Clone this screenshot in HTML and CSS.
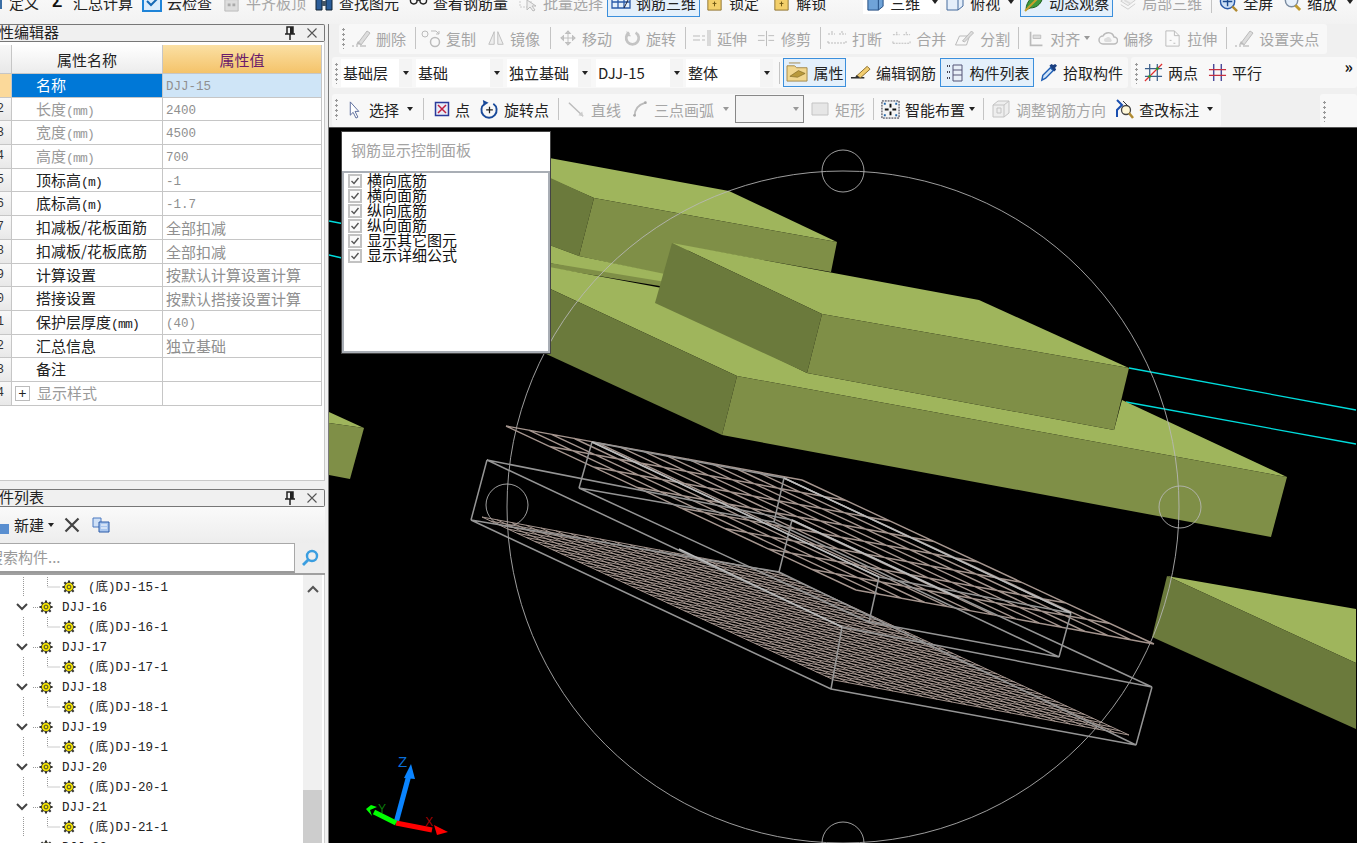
FILE: index.html
```html
<!DOCTYPE html>
<html lang="zh-CN">
<head>
<meta charset="utf-8">
<title>钢筋三维</title>
<link rel="stylesheet" href="styles.css">
</head>
<body>
<svg class="sprite" xmlns="http://www.w3.org/2000/svg">
  <symbol id="i-del" viewBox="0 0 20 20"><path d="M1 18h2M5 18h2M9 18h6" stroke="#aaa" fill="none"/><path d="M7 15 16 3l3 2-9 12z" fill="#ddd" stroke="#bbb"/><path d="M5 17l2-4 3 3z" fill="#bbb"/></symbol>
  <symbol id="i-copy" viewBox="0 0 20 20"><circle cx="4" cy="6" r="3" fill="none" stroke="#bbb"/><circle cx="14" cy="14" r="4.5" fill="none" stroke="#bbb" stroke-width="1.5"/><path d="M10 3h5l3 3M18 3v3h-3" fill="none" stroke="#bbb"/></symbol>
  <symbol id="i-mirror" viewBox="0 0 20 20"><path d="M8 3 2 17h6zM12 3l6 14h-6z" fill="#eee" stroke="#bbb"/></symbol>
  <symbol id="i-move" viewBox="0 0 20 20"><path d="M10 2v16M2 10h16M10 2 7 5h6zM10 18l-3-3h6zM2 10l3-3v6zM18 10l-3-3v6z" fill="#ccc" stroke="#bbb"/></symbol>
  <symbol id="i-rot" viewBox="0 0 20 20"><path d="M7 4a7 7 0 1 0 7 0" fill="none" stroke="#c4c4c4" stroke-width="3"/><path d="M4 2v6h5z" fill="#c4c4c4"/></symbol>
  <symbol id="i-ext" viewBox="0 0 20 20"><path d="M1 8h7M1 12h7M10 8h3M10 12h3M16 2v16M18 2v16" stroke="#bbb" fill="none"/></symbol>
  <symbol id="i-trim" viewBox="0 0 20 20"><path d="M1 7h7M1 12h7M12 7h6M12 12h6M10 2v16" stroke="#bbb" fill="none"/></symbol>
  <symbol id="i-brk" viewBox="0 0 20 20"><path d="M1 6h7M12 6h7M1 15h18M1 15v-3M19 15v-3M5 3v3M15 3v3" stroke="#bbb" fill="none" stroke-dasharray="2 1"/></symbol>
  <symbol id="i-split" viewBox="0 0 20 20"><path d="M1 17 5 8h10l-3 9z" fill="none" stroke="#bbb"/><path d="M8 13 17 3l2 2-9 9z" fill="#ddd" stroke="#bbb"/></symbol>
  <symbol id="i-align" viewBox="0 0 20 20"><path d="M3 2v16h14" fill="none" stroke="#bbb" stroke-width="2"/><path d="M6 6h9v4H6z" fill="#ddd" stroke="#bbb"/></symbol>
  <symbol id="i-off" viewBox="0 0 20 20"><path d="M5 16a4 4 0 0 1 0-8 6 6 0 0 1 11 1 3.500 3.500 0 0 1 0 7z" fill="none" stroke="#bbb" stroke-width="1.500"/><path d="M8 14a2 2 0 0 1 0-4 3 3 0 0 1 5 1 2 2 0 0 1 0 3z" fill="#ddd"/></symbol>
  <symbol id="i-str" viewBox="0 0 20 20"><path d="M3 2h9l5 5v11H3z" fill="#fafafa" stroke="#bbb"/><path d="M12 2v5h5M7 12h2M11 15h2" stroke="#bbb" fill="none"/></symbol>
  <symbol id="i-attr" viewBox="0 0 24 22"><path d="M1 4h8l2 2h11v14H1z" fill="#f1d78f" stroke="#a3884a"/><path d="M4 15l9-6 7 3-8 4z" fill="#b99a3c" stroke="#75601f" stroke-width=".6"/><path d="M3 1h12" stroke="#a3884a"/></symbol>
  <symbol id="i-edit" viewBox="0 0 22 20"><path d="M1 15h14" stroke="#222" stroke-width="1.500"/><path d="M7 13 18 3l3 3-10 9z" fill="#f2cd70" stroke="#8a6d2c"/><path d="M5 15l2-3 3 3z" fill="#333"/></symbol>
  <symbol id="i-list" viewBox="0 0 20 20"><path d="M2 3h3M2 9h3M2 15h3" stroke="#445" stroke-width="2" stroke-dasharray="1 1"/><path d="M8 2h9v16H8zM8 7h9M8 12h9" fill="#e8f0f8" stroke="#557"/></symbol>
  <symbol id="i-pick" viewBox="0 0 20 20"><path d="M3 18l1-5 8-8 3 3-8 8z" fill="#cfe3f8" stroke="#1f5fb5" stroke-width="1.500"/><path d="M11 3l2-2 2 1 2-1 2 2-2 2 1 2-2 2z" fill="#1a3f80"/></symbol>
  <symbol id="i-two" viewBox="0 0 20 20"><path d="M1 6h18M1 14h18M6 1v18M14 1v18" stroke="#3b5f8a" fill="none" stroke-width="1.300"/><path d="M1 19 19 1" stroke="#e03030" stroke-width="1.300"/><circle cx="6" cy="14" r="1.500" fill="#2a9a2a"/><circle cx="14" cy="6" r="1.500" fill="#2a9a2a"/></symbol>
  <symbol id="i-par" viewBox="0 0 20 20"><path d="M6 1v18M14 1v18" stroke="#4a4a9a" stroke-width="1.500"/><path d="M1 7h18M1 13h18" stroke="#c83040" stroke-width="1.500"/></symbol>
  <symbol id="i-cur" viewBox="0 0 17 20"><path d="M3 2v14l3-3 3 6 2-1-3-6h4z" fill="#fff" stroke="#5a6a9a"/></symbol>
  <symbol id="i-pt" viewBox="0 0 16 16"><path d="M1.500 1.500h13v13h-13z" fill="#e8ecf8" stroke="#2a3a9a" stroke-width="1.500"/><path d="M4 4l8 8M12 4l-8 8" stroke="#c02040" stroke-width="1.500"/></symbol>
  <symbol id="i-rp" viewBox="0 0 20 20"><path d="M5 4a8 8 0 1 0 9 0" fill="none" stroke="#1a4a9a" stroke-width="2"/><path d="M3 0l6 3-5 3z" fill="#1a4a9a"/><path d="M10 7v7M6.500 10.500h7" stroke="#222" stroke-width="1.300"/></symbol>
  <symbol id="i-line" viewBox="0 0 20 20"><path d="M2 3 17 17" stroke="#bbb" stroke-width="1.500"/><path d="M17 17l-5-1 4-4z" fill="#ccc"/></symbol>
  <symbol id="i-arc" viewBox="0 0 20 20"><path d="M4 18C4 10 9 5 16 3" fill="none" stroke="#bbb" stroke-width="2"/><circle cx="4" cy="17" r="1.500" fill="#aaa"/><circle cx="16" cy="3" r="1.500" fill="#aaa"/></symbol>
  <symbol id="i-rect" viewBox="0 0 20 20"><path d="M2 4h16v12H2z" fill="#e6e6e6" stroke="#c4c4c4"/></symbol>
  <symbol id="i-smart" viewBox="0 0 20 20"><path d="M1 1h18v18H1z" fill="#f4f4f4" stroke="#223" stroke-dasharray="2 1"/><path d="M10 4v4M10 12v4M4 10h4M12 10h4" stroke="#111" stroke-width="2"/><path d="M3 3h2v2H3zM15 3h2v2h-2zM3 15h2v2H3zM15 15h2v2h-2z" fill="#26a"/></symbol>
  <symbol id="i-adj" viewBox="0 0 20 20"><path d="M2 6 7 2h11v12l-5 4H2z" fill="#eee" stroke="#c4c4c4"/><path d="M2 6h11v12M13 6l5-4M6 9h4v5H6z" fill="none" stroke="#c4c4c4"/></symbol>
  <symbol id="i-mark" viewBox="0 0 20 20"><path d="M3 1 8 6 3 11v7" fill="none" stroke="#1a4fb0" stroke-width="2"/><circle cx="12" cy="11" r="4.500" fill="#fff8d8" stroke="#444" stroke-width="1.300"/><path d="M15 14l4 5" stroke="#b08a30" stroke-width="2.500"/><path d="M9 2l5 5" stroke="#333"/></symbol>
  <symbol id="i-cloud" viewBox="0 0 20 20"><path d="M1 3h18v16H1z" fill="#dcecfb" stroke="#1f84d8" stroke-width="2"/><path d="M5 9l4 4 7-7" fill="none" stroke="#1669b5" stroke-width="2"/></symbol>
  <symbol id="i-flush" viewBox="0 0 20 20"><path d="M3 7h14v12H3z" fill="#ddd" stroke="#bbb"/><path d="M6 3h12v4H6z" fill="#c4c4c4"/><path d="M6 11h3v3H6zM11 11h3v3h-3z" fill="#aaa"/></symbol>
  <symbol id="i-find" viewBox="0 0 20 20"><path d="M2 6h6v12H2zM12 6h6v12h-6z" fill="#2b5d99" stroke="#123"/><path d="M8 9h4v5H8zM4 2h3v4H4zM13 2h3v4h-3z" fill="#456"/></symbol>
  <symbol id="i-glass" viewBox="0 0 20 20"><circle cx="5" cy="8" r="3.500" fill="none" stroke="#222" stroke-width="1.500"/><circle cx="15" cy="8" r="3.500" fill="none" stroke="#222" stroke-width="1.500"/><path d="M8 8h4M1 6l2-3M19 6l-2-3" stroke="#222"/></symbol>
  <symbol id="i-batch" viewBox="0 0 20 20"><path d="M2 2h11v13H2z" fill="none" stroke="#ccc" stroke-dasharray="2 1"/><path d="M9 8v10l3-3 3 4 2-1-3-4h4z" fill="#eee" stroke="#bbb"/></symbol>
  <symbol id="i-r3d" viewBox="0 0 20 20"><path d="M1 4h18v12H1zM7 4v12M13 4v12M1 10h18" fill="none" stroke="#2a5aa8" stroke-width="1.300"/><path d="M13 16 19 4" stroke="#223"/></symbol>
  <symbol id="i-lock" viewBox="0 0 20 20"><path d="M3 6h14v12H3z" fill="#f3cf6a" stroke="#8f7430"/><path d="M6 6V3h8v3" fill="none" stroke="#999" stroke-width="1.500"/><path d="M10 9v5M8 11h4" stroke="#6c5413"/></symbol>
  <symbol id="i-cube" viewBox="0 0 20 20"><path d="M2 6 7 2h11v12l-5 4H2z" fill="#6fa3d8" stroke="#1f4a80"/><path d="M2 6h11v12M13 6l5-4" fill="none" stroke="#1f4a80"/></symbol>
  <symbol id="i-top" viewBox="0 0 20 20"><path d="M2 6 7 2h11v12l-5 4H2z" fill="#e4eefa" stroke="#456a9c"/><path d="M2 6h11v12M13 6l5-4" fill="none" stroke="#456a9c"/><path d="M7 2h11l-5 4H2z" fill="#a9c8ea"/></symbol>
  <symbol id="i-dyn" viewBox="0 0 20 20"><path d="M2 18C2 9 9 2 19 2c0 8-5 14-13 14z" fill="#3e9a3e" stroke="#1d5f1d"/><path d="M1 19 13 7" stroke="#c9a02c" stroke-width="2"/></symbol>
  <symbol id="i-part" viewBox="0 0 20 20"><path d="M2 9 10 3l8 5-8 6z" fill="#f1f1f1" stroke="#ccc"/><path d="M2 13l8 5 8-6" fill="none" stroke="#ccc"/><path d="M6 8l7 4" stroke="#ddd" stroke-width="2"/></symbol>
  <symbol id="i-full" viewBox="0 0 20 20"><circle cx="9" cy="9" r="7.500" fill="#cde0f6" stroke="#2a5aa8" stroke-width="1.500"/><path d="M9 4v10M4 9h10" stroke="#1a4a90" stroke-width="1.500"/><path d="M14 14l5 5" stroke="#b08a30" stroke-width="2.500"/></symbol>
  <symbol id="i-zoom" viewBox="0 0 20 20"><circle cx="9" cy="8" r="6.500" fill="#e8f1fb" stroke="#7a8ba0" stroke-width="1.500"/><path d="M13 13l5 5" stroke="#c09a30" stroke-width="3"/></symbol>
  <symbol id="i-gear" viewBox="0 0 16 16"><path d="M8 .5v15M.5 8h15M2.700 2.700l10.600 10.600M13.300 2.700 2.700 13.300" stroke="#333" stroke-width="2.400"/><circle cx="8" cy="8" r="5.200" fill="#f4e400" stroke="#333"/><circle cx="8" cy="8" r="2.200" fill="#f4e400" stroke="#333"/></symbol>
  <symbol id="i-pin" viewBox="0 0 12 14"><path d="M3 1h6v7H3zM1 8h10M6 8v6" fill="none" stroke="#222" stroke-width="1.500"/><path d="M6 1h3v7H6z" fill="#222"/></symbol>
  <symbol id="i-x" viewBox="0 0 12 12"><path d="M1.500 1.500l9 9M10.500 1.500l-9 9" stroke="#555" stroke-width="1.100"/></symbol>
  <symbol id="i-check" viewBox="0 0 14 14"><path d="M1 1h12v12H1z" fill="#fafafa" stroke="#c2c2c2" stroke-width="2"/><path d="M3.500 7 6 9.500 10.500 4" fill="none" stroke="#555" stroke-width="1.400"/></symbol>
</svg>

<header class="row-a">
  <div class="row-a-inner">
    <span class="clip-mark"></span>
    <span class="tool m7"><span>定义</span></span>
    <span class="sigma m13">Σ</span>
    <span class="tool m11"><span>汇总计算</span></span>
    <span class="tool m9"><svg class="ic20"><use href="#i-cloud"/></svg><span>云检查</span></span>
    <span class="tool off m10"><svg class="ic19"><use href="#i-flush"/></svg><span>平齐板顶</span></span>
    <span class="tool m8"><svg class="ic20"><use href="#i-find"/></svg><span>查找图元</span></span>
    <span class="tool m10"><svg class="ic19"><use href="#i-glass"/></svg><span>查看钢筋量</span></span>
    <span class="tool off m10"><svg class="ic20"><use href="#i-batch"/></svg><span>批量选择</span></span>
    <span class="tool on a-on m4"><svg class="ic20"><use href="#i-r3d"/></svg><span>钢筋三维</span></span>
    <span class="tool m5"><svg class="ic19"><use href="#i-lock"/></svg><span>锁定</span></span>
    <span class="tool m13"><svg class="ic19"><use href="#i-lock"/></svg><span>解锁</span></span>
    <span class="combo3d m37"><span class="tool"><svg class="ic19"><use href="#i-cube"/></svg><span>三维</span></span><i class="arrow dark m12"></i></span>
    <span class="tool m5"><svg class="ic20"><use href="#i-top"/></svg><span>俯视</span></span>
    <i class="arrow dark m8"></i>
    <span class="tool on a-on2 m6"><svg class="ic20"><use href="#i-dyn"/></svg><span>动态观察</span></span>
    <span class="tool off m6"><svg class="ic18"><use href="#i-part"/></svg><span>局部三维</span></span>
    <i class="sep m9"></i>
    <span class="tool m7"><svg class="ic19"><use href="#i-full"/></svg><span>全屏</span></span>
    <span class="tool m10"><svg class="ic19"><use href="#i-zoom"/></svg><span>缩放</span></span>
    <i class="arrow dark m10"></i>
  </div>
</header>

<div class="body-row">
  <aside class="left">
    <section class="pane prop-pane">
      <div class="dock-title"><span class="dock-name">属性编辑器</span><svg class="pin"><use href="#i-pin"/></svg><svg class="close"><use href="#i-x"/></svg></div>
      <div class="prop-wrap">
        <div class="prop-grid">
          <div class="c idx"></div><div class="c hdr-name">属性名称</div><div class="c hdr-val">属性值</div>

          <div class="c idx idx-sel">1</div><div class="c name sel-name">名称</div><div class="c val sel-val">DJJ-15</div>
          <div class="c idx">2</div><div class="c name dim">长度<span class="u">(mm)</span></div><div class="c val">2400</div>
          <div class="c idx">3</div><div class="c name dim">宽度<span class="u">(mm)</span></div><div class="c val">4500</div>
          <div class="c idx">4</div><div class="c name dim">高度<span class="u">(mm)</span></div><div class="c val">700</div>
          <div class="c idx">5</div><div class="c name">顶标高<span class="u">(m)</span></div><div class="c val">-1</div>
          <div class="c idx">6</div><div class="c name">底标高<span class="u">(m)</span></div><div class="c val">-1.7</div>
          <div class="c idx">7</div><div class="c name">扣减板/花板面筋</div><div class="c val cjk">全部扣减</div>
          <div class="c idx">8</div><div class="c name">扣减板/花板底筋</div><div class="c val cjk">全部扣减</div>
          <div class="c idx">9</div><div class="c name">计算设置</div><div class="c val cjk">按默认计算设置计算</div>
          <div class="c idx">10</div><div class="c name">搭接设置</div><div class="c val cjk">按默认搭接设置计算</div>
          <div class="c idx">11</div><div class="c name">保护层厚度<span class="u">(mm)</span></div><div class="c val">(40)</div>
          <div class="c idx">12</div><div class="c name">汇总信息</div><div class="c val cjk">独立基础</div>
          <div class="c idx">13</div><div class="c name">备注</div><div class="c val"></div>
          <div class="c idx">14</div><div class="c name dim name-plus"><span class="plus">+</span>显示样式</div><div class="c val"></div>
        </div>
      </div>
    </section>

    <section class="pane list-pane">
      <div class="dock-title"><span class="dock-name">构件列表</span><svg class="pin"><use href="#i-pin"/></svg><svg class="close"><use href="#i-x"/></svg></div>
      <div class="list-tools">
        <span class="new-clip"></span>
        <span class="new-text">新建</span><i class="arrow dark m4"></i>
        <svg class="tool-x" viewBox="0 0 16 16"><path d="M1.500 1.500l13 13M14.500 1.500l-13 13" stroke="#444" stroke-width="2.200"/></svg>
        <svg class="tool-copy" viewBox="0 0 18 16"><path d="M1 1h8v9H1z" fill="#cfe0f6" stroke="#4a78c0"/><path d="M7 5h10v10H7z" fill="#a9c6ee" stroke="#2a5aa8"/><path d="M9 8h6M9 11h6" stroke="#fff"/></svg>
      </div>
      <div class="search">
        <div class="search-box"><span class="search-text">搜索构件...</span></div>
        <div class="search-btn"><svg viewBox="0 0 18 18" class="search-ic"><circle cx="11" cy="7" r="5" fill="none" stroke="#3b9ee0" stroke-width="2.400"/><path d="M7 11l-5 5" stroke="#3b9ee0" stroke-width="2.800"/></svg></div>
      </div>
      <div class="tree-area">
        <div class="tree">
          <div class="t-row"><svg class="conn-c" viewBox="0 0 80 20"><path class="dots" d="M23.500 0V20M47.500 0V10H60"/><use href="#i-gear" x="62" y="3" width="14" height="14"/></svg><span class="t-text">(底)DJ-15-1</span></div>
          <div class="t-row"><svg class="conn-p" viewBox="0 0 54 20"><path d="M17 7l5 5 5-5" fill="none" stroke="#444" stroke-width="2"/><path class="dots" d="M33 10.500h5"/><use href="#i-gear" x="39" y="3" width="14" height="14"/></svg><span class="t-text">DJJ-16</span></div>
          <div class="t-row"><svg class="conn-c" viewBox="0 0 80 20"><path class="dots" d="M23.500 0V20M47.500 0V10H60"/><use href="#i-gear" x="62" y="3" width="14" height="14"/></svg><span class="t-text">(底)DJ-16-1</span></div>
          <div class="t-row"><svg class="conn-p" viewBox="0 0 54 20"><path d="M17 7l5 5 5-5" fill="none" stroke="#444" stroke-width="2"/><path class="dots" d="M33 10.500h5"/><use href="#i-gear" x="39" y="3" width="14" height="14"/></svg><span class="t-text">DJJ-17</span></div>
          <div class="t-row"><svg class="conn-c" viewBox="0 0 80 20"><path class="dots" d="M23.500 0V20M47.500 0V10H60"/><use href="#i-gear" x="62" y="3" width="14" height="14"/></svg><span class="t-text">(底)DJ-17-1</span></div>
          <div class="t-row"><svg class="conn-p" viewBox="0 0 54 20"><path d="M17 7l5 5 5-5" fill="none" stroke="#444" stroke-width="2"/><path class="dots" d="M33 10.500h5"/><use href="#i-gear" x="39" y="3" width="14" height="14"/></svg><span class="t-text">DJJ-18</span></div>
          <div class="t-row"><svg class="conn-c" viewBox="0 0 80 20"><path class="dots" d="M23.500 0V20M47.500 0V10H60"/><use href="#i-gear" x="62" y="3" width="14" height="14"/></svg><span class="t-text">(底)DJ-18-1</span></div>
          <div class="t-row"><svg class="conn-p" viewBox="0 0 54 20"><path d="M17 7l5 5 5-5" fill="none" stroke="#444" stroke-width="2"/><path class="dots" d="M33 10.500h5"/><use href="#i-gear" x="39" y="3" width="14" height="14"/></svg><span class="t-text">DJJ-19</span></div>
          <div class="t-row"><svg class="conn-c" viewBox="0 0 80 20"><path class="dots" d="M23.500 0V20M47.500 0V10H60"/><use href="#i-gear" x="62" y="3" width="14" height="14"/></svg><span class="t-text">(底)DJ-19-1</span></div>
          <div class="t-row"><svg class="conn-p" viewBox="0 0 54 20"><path d="M17 7l5 5 5-5" fill="none" stroke="#444" stroke-width="2"/><path class="dots" d="M33 10.500h5"/><use href="#i-gear" x="39" y="3" width="14" height="14"/></svg><span class="t-text">DJJ-20</span></div>
          <div class="t-row"><svg class="conn-c" viewBox="0 0 80 20"><path class="dots" d="M23.500 0V20M47.500 0V10H60"/><use href="#i-gear" x="62" y="3" width="14" height="14"/></svg><span class="t-text">(底)DJ-20-1</span></div>
          <div class="t-row"><svg class="conn-p" viewBox="0 0 54 20"><path d="M17 7l5 5 5-5" fill="none" stroke="#444" stroke-width="2"/><path class="dots" d="M33 10.500h5"/><use href="#i-gear" x="39" y="3" width="14" height="14"/></svg><span class="t-text">DJJ-21</span></div>
          <div class="t-row"><svg class="conn-c" viewBox="0 0 80 20"><path class="dots" d="M23.500 0V20M47.500 0V10H60"/><use href="#i-gear" x="62" y="3" width="14" height="14"/></svg><span class="t-text">(底)DJ-21-1</span></div>
          <div class="t-row"><svg class="conn-p" viewBox="0 0 54 20"><path d="M17 7l5 5 5-5" fill="none" stroke="#444" stroke-width="2"/><path class="dots" d="M33 10.500h5"/><use href="#i-gear" x="39" y="3" width="14" height="14"/></svg><span class="t-text">DJJ-22</span></div>
        </div>
        <div class="scroll"><svg class="scroll-up" viewBox="0 0 12 8"><path d="M1 7l5-5 5 5" fill="none" stroke="#555" stroke-width="2"/></svg><div class="thumb"></div></div>
      </div>
    </section>
  </aside>

  <main class="main">
    <div class="row-b">
      <div class="bar bar-b">
        <i class="grip"></i>
        <span class="tool off m6"><svg class="ic20"><use href="#i-del"/></svg><span>删除</span></span>
        <i class="sep m9"></i>
        <span class="tool off m5"><svg class="ic20"><use href="#i-copy"/></svg><span>复制</span></span>
        <span class="tool off m11"><svg class="ic18"><use href="#i-mirror"/></svg><span>镜像</span></span>
        <i class="sep m10"></i>
        <span class="tool off m8"><svg class="ic18"><use href="#i-move"/></svg><span>移动</span></span>
        <span class="tool off m11"><svg class="ic18"><use href="#i-rot"/></svg><span>旋转</span></span>
        <i class="sep m9"></i>
        <span class="tool off m6"><svg class="ic20"><use href="#i-ext"/></svg><span>延伸</span></span>
        <span class="tool off m10"><svg class="ic19"><use href="#i-trim"/></svg><span>修剪</span></span>
        <i class="sep m9"></i>
        <span class="tool off m6"><svg class="ic20"><use href="#i-brk"/></svg><span>打断</span></span>
        <span class="tool off m10"><svg class="ic19"><use href="#i-brk"/></svg><span>合并</span></span>
        <span class="tool off m8"><svg class="ic21"><use href="#i-split"/></svg><span>分割</span></span>
        <i class="sep m8"></i>
        <span class="tool off m9"><svg class="ic17"><use href="#i-align"/></svg><span>对齐</span></span>
        <i class="arrow m4"></i>
        <span class="tool off m8"><svg class="ic20"><use href="#i-off"/></svg><span>偏移</span></span>
        <span class="tool off m10"><svg class="ic19"><use href="#i-str"/></svg><span>拉伸</span></span>
        <i class="sep m9"></i>
        <span class="tool off m7"><svg class="ic20"><use href="#i-del"/></svg><span>设置夹点</span></span>
      </div>
    </div>

    <div class="row-c">
      <div class="bar bar-c1">
        <i class="grip"></i>
        <span class="sel s71 m3"><span>基础层</span><b><i class="arrow dark"></i></b></span>
        <span class="sel s87 m4"><span>基础</span><b><i class="arrow dark"></i></b></span>
        <span class="sel s84 m4"><span>独立基础</span><b><i class="arrow dark"></i></b></span>
        <span class="sel s87 m5"><span>DJJ-15</span><b><i class="arrow dark"></i></b></span>
        <span class="sel s87 m3"><span>整体</span><b><i class="arrow dark"></i></b></span>
        <i class="sep m6"></i>
        <span class="tool on c-attr m3"><svg class="ic23"><use href="#i-attr"/></svg><span>属性</span></span>
        <span class="tool m4"><svg class="ic21"><use href="#i-edit"/></svg><span>编辑钢筋</span></span>
        <span class="tool on c-list m4"><svg class="ic20"><use href="#i-list"/></svg><span>构件列表</span></span>
        <span class="tool m5"><svg class="ic19"><use href="#i-pick"/></svg><span>拾取构件</span></span>
      </div>
      <div class="bar bar-c2">
        <i class="grip"></i>
        <span class="tool m6"><svg class="ic19"><use href="#i-two"/></svg><span>两点</span></span>
        <span class="tool m10"><svg class="ic19"><use href="#i-par"/></svg><span>平行</span></span>
        <span class="more">»</span>
      </div>
    </div>

    <div class="row-d">
      <div class="bar bar-d">
        <i class="grip"></i>
        <span class="tool m9"><svg class="ic17"><use href="#i-cur"/></svg><span>选择</span></span>
        <i class="arrow dark m8"></i>
        <i class="sep m10"></i>
        <span class="tool m10"><svg class="ic16"><use href="#i-pt"/></svg><span>点</span></span>
        <span class="tool m10"><svg class="ic19"><use href="#i-rp"/></svg><span>旋转点</span></span>
        <i class="sep m9"></i>
        <span class="tool off m8"><svg class="ic19"><use href="#i-line"/></svg><span>直线</span></span>
        <span class="tool off m10"><svg class="ic18"><use href="#i-arc"/></svg><span>三点画弧</span></span>
        <i class="arrow m9"></i>
        <span class="combo m6"><i class="arrow"></i></span>
        <span class="tool off m6"><svg class="ic20"><use href="#i-rect"/></svg><span>矩形</span></span>
        <i class="sep m8"></i>
        <span class="tool m7"><svg class="ic19"><use href="#i-smart"/></svg><span>智能布置</span></span>
        <i class="arrow dark m4"></i>
        <i class="sep m8"></i>
        <span class="tool off m7"><svg class="ic20"><use href="#i-adj"/></svg><span>调整钢筋方向</span></span>
        <span class="tool m8"><svg class="ic20"><use href="#i-mark"/></svg><span>查改标注</span></span>
        <i class="arrow dark m8"></i>
      </div>
      <div class="bar bar-d2"><i class="grip"></i></div>
    </div>

    <div class="canvas">
      <svg class="scene" viewBox="330 128 1027 715" xmlns="http://www.w3.org/2000/svg">
        <g class="cyan">
          <path d="M330 221 343 223.500M330 255 343 258M1130 368 1357 410M1127 402 1357 444"/>
        </g>
        <!-- upper block -->
        <polygon class="g-top" points="545,157 730,191 838,242 595,198 545,176"/>
        <polygon class="g-dark" points="545,175 595,198 580,256 545,243"/>
        <polygon class="g-side" points="595,198 838,242 832,272 690,247 680,278 580,256"/>
        <!-- thin plates -->
        <polygon class="g-top" points="545,243 580,256 685,278 685,290 545,262"/>
        <polygon class="g-side" points="545,262 685,285 685,290 545,267"/>
        <!-- base -->
        <polygon class="g-top" points="545,266 690,293 690,315 808,373 1115,430 1123,400 1288,477 738,376 545,286"/>
        <polygon class="g-dark" points="545,286 738,376 723,435 545,353"/>
        <polygon class="g-side" points="738,376 1288,477 1272,537 723,435"/>
        <!-- middle block -->
        <polygon class="g-top" points="673,243 980,300 1130,368 823,314"/>
        <polygon class="g-dark" points="673,243 823,314 808,373 656,303"/>
        <polygon class="g-side" points="823,314 1130,368 1115,430 808,373"/>
        <!-- right block -->
        <polygon class="g-top" points="1168,576 1357,609 1357,663"/>
        <polygon class="g-dark" points="1168,576 1357,663 1357,729 1153,637"/>
        <!-- left block -->
        <polygon class="g-top" points="330,412 365,428 330,423"/>
        <polygon class="g-side" points="330,423 365,428 351,479 330,475"/>

        <g class="gizmo">
          <circle cx="844" cy="507" r="336"/>
          <circle cx="844" cy="171" r="21"/>
          <circle cx="1181" cy="507" r="21"/>
          <circle cx="508" cy="505" r="21"/>
          <circle cx="844" cy="843" r="21"/>
        </g>

        <path id="mesh-up" class="mesh"/>
        <path id="mesh-low" class="mesh mesh-thin"/>

        <g class="wire">
          <path d="M488 460 793 520 1153 687 843 627ZM472 520 780 572 1137 745 832 689ZM488 460 472 520M793 520 780 572M1153 687 1137 745M843 627 832 689"/>
          <path d="M593 442 785 478 1072 613 880 577ZM580 488 775 522 1060 657 870 622ZM593 442 580 488M785 478 775 522M1072 613 1060 657M880 577 870 622"/>
          <path class="wire-hi" d="M593 442 880 577M785 478 1072 613M680 549 843 627M793 520 960 598"/>
        </g>

        <g class="axes">
          <path class="ax-b" d="M397 823 410 775"/>
          <path class="ax-b-h" d="M412 764 416 779 405 778z"/>
          <path class="ax-r" d="M397 823 433 830"/>
          <path class="ax-r-h" d="M449 832 435 825 438 835z"/>
          <path class="ax-g" d="M397 823 375 812"/>
          <path class="ax-g-h" d="M367 809 372 805 378 807 371 810 373 816z"/>
          <text class="ax-t z" x="399" y="767">Z</text>
          <text class="ax-t y" x="379" y="813">Y</text>
          <text class="ax-t x" x="426" y="826">X</text>
        </g>
      </svg>

      <div class="float-panel">
        <div class="float-title">钢筋显示控制面板</div>
        <div class="float-list">
          <div class="chk"><svg><use href="#i-check"/></svg><span>横向底筋</span></div>
          <div class="chk"><svg><use href="#i-check"/></svg><span>横向面筋</span></div>
          <div class="chk"><svg><use href="#i-check"/></svg><span>纵向底筋</span></div>
          <div class="chk"><svg><use href="#i-check"/></svg><span>纵向面筋</span></div>
          <div class="chk"><svg><use href="#i-check"/></svg><span>显示其它图元</span></div>
          <div class="chk"><svg><use href="#i-check"/></svg><span>显示详细公式</span></div>
        </div>
      </div>
    </div>
  </main>
</div>
<script src="script.js"></script>
</body>
</html>
```
FILE: styles.css
```css
* { box-sizing: border-box; }
html, body { margin: 0; height: 100%; }
body {
  width: 1357px; height: 843px; overflow: hidden;
  background: #f0f0f0; color: #222;
  font: 15px/1 "Noto Sans CJK SC", "Liberation Sans", sans-serif;
  display: flex; flex-direction: column;
}
.sprite { position: absolute; width: 0; height: 0; }
i { display: block; font-style: normal; flex: none; }

.m3 { margin-left: 3px; } .m4 { margin-left: 4px; } .m5 { margin-left: 5px; }
.m6 { margin-left: 6px; } .m7 { margin-left: 7px; } .m8 { margin-left: 8px; }
.m9 { margin-left: 9px; } .m10 { margin-left: 10px; } .m11 { margin-left: 11px; }
.m12 { margin-left: 12px; } .m13 { margin-left: 13px; } .m37 { margin-left: 37px; }

.ic16 { width: 16px; height: 16px; } .ic17 { width: 17px; height: 19px; }
.ic18 { width: 18px; height: 18px; } .ic19 { width: 19px; height: 19px; }
.ic20 { width: 20px; height: 20px; } .ic21 { width: 21px; height: 20px; }
.ic23 { width: 23px; height: 21px; }

.tool { display: flex; align-items: center; gap: 5px; flex: none; white-space: nowrap; }
.tool svg { flex: none; }
.tool.off { color: #a6a6a6; }
.tool.on { border: 1px solid #3b8fdc; background: #e4f0fb; height: 29px; justify-content: center; }
.sep { width: 1px; height: 22px; background: #c4c4c4; }
.grip { width: 3px; height: 22px; margin-left: 3px;
  background: radial-gradient(circle, #999 1px, transparent 1.300px) 0 0 / 3px 5px; }
.arrow { width: 0; height: 0; border: 3.500px solid transparent; border-top: 4px solid #999; border-bottom: 0; }
.arrow.dark { border-top-color: #222; }

/* top strip, cropped by the window edge */
.row-a { height: 24px; overflow: hidden; flex: none;
  background: linear-gradient(#f8f8f8, #f2f2f2); }
.row-a-inner { display: flex; align-items: center; height: 24px; margin-top: -10px; }
.clip-mark { width: 2px; height: 14px; background: #3a6ea5; flex: none; }
.sigma { font: bold 17px "Liberation Sans", sans-serif; color: #111; width: 10px; flex: none; }
.a-on { width: 93px; }
.a-on2 { width: 93px; }
.combo3d { display: flex; align-items: center; background: #fff; height: 24px; width: 77px; padding-left: 3px; flex: none; }

.body-row { display: flex; flex: 1; min-height: 0; }

/* left column */
.left { width: 329px; flex: none; border-right: 1px solid #7a7a7a; display: flex; flex-direction: column; }
.pane { width: 326px; background: #f0f0f0; display: flex; flex-direction: column; }
.prop-pane { height: 457px; }
.list-pane { margin-top: 8px; flex: 1; min-height: 0; }
.dock-title { height: 18px; border: 1px solid #777; border-left: 0; border-radius: 0 2px 2px 0; background: #f0f0f0;
  display: flex; align-items: center; padding-right: 6px; width: 325px; flex: none; overflow: hidden; }
.dock-name { margin-left: -16px; margin-bottom: 3px; color: #222; }
.pin { width: 12px; height: 14px; margin-left: auto; }
.close { width: 12px; height: 12px; margin-left: 10px; }

.prop-wrap { background: #fff; flex: 1; border-right: 1px solid #c8c8c8; border-bottom: 1px solid #c8c8c8; margin-right: 1px; padding-top: 3px; }
.prop-grid { display: grid; width: 322px; grid-template-columns: 12px 151px 159px; grid-template-rows: 29px repeat(14, 23.700px); }
.c { border-right: 1px solid #c6c6c6; border-bottom: 1px solid #c6c6c6; display: flex; align-items: center; overflow: hidden; }
.idx { justify-content: flex-end; background: linear-gradient(#f8f8f8, #e8e8e8); font: 12px "Liberation Mono", monospace; color: #333; padding-right: 7px; }
.idx-sel { background: #fbd99a; color: transparent; }
.hdr-name { justify-content: center; background: linear-gradient(#fff, #ececec); color: #222; }
.hdr-val { justify-content: center; background: linear-gradient(#fbe0a4, #f4c36a); color: #6a1b6a; }
.name { display: block; line-height: 22.700px; padding-left: 24px; color: #222; white-space: nowrap; }
.name.dim { color: #9a9a9a; }
.u { font: 13px "Liberation Mono", monospace; letter-spacing: -.8px; }
.sel-name { background: #0078d7; color: #fff; }
.val { padding: 3px 0 0 3px; color: #8f8f8f; font: 12.500px "Liberation Mono", "Noto Sans CJK SC", monospace; white-space: nowrap; }
.val.cjk { padding-top: 0; font: 15px "Noto Sans CJK SC", sans-serif; }
.sel-val { background: #cfe5f7; }
.name-plus { display: flex; align-items: center; padding-left: 3px; }
.plus { width: 15px; height: 15px; border: 1px solid #bbb; margin-right: 7px; display: flex; align-items: center; justify-content: center; color: #222; font-size: 14px; }

.list-tools { height: 36px; flex: none; display: flex; align-items: center; background: linear-gradient(#fafafa, #ededed); width: 325px; }
.new-clip { width: 9px; height: 10px; background: #5a8fd0; margin-top: 7px; flex: none; }
.new-text { margin-left: 5px; margin-bottom: 2px; color: #222; }
.tool-x { width: 16px; height: 16px; margin-left: 10px; }
.tool-copy { width: 18px; height: 16px; margin-left: 12px; }

.search { height: 32px; flex: none; display: flex; border-bottom: 2px solid #a0a0a0; width: 325px; overflow: hidden; }
.search-box { width: 295px; background: #fff; border: 1px solid #a8a8a8; border-left: 0; border-bottom: 2px solid #9a9a9a; padding-bottom: 3px; display: flex; align-items: center; overflow: hidden; }
.search-text { margin-left: -12px; color: #9a9a9a; white-space: nowrap; }
.search-btn { flex: 1; display: flex; align-items: center; justify-content: center; background: #eee; }
.search-ic { width: 18px; height: 18px; }

.tree-area { flex: 1; min-height: 0; display: flex; background: #fff; width: 325px; border-right: 1px solid #d0d0d0; overflow: hidden; }
.tree { width: 303px; padding-top: 2px; flex: none; }
.t-row { height: 20px; display: flex; align-items: center; }
.conn-c { width: 80px; height: 20px; flex: none; }
.conn-p { width: 54px; height: 20px; flex: none; }
.t-text { margin-left: 8px; font: 12.500px "Liberation Mono", "Noto Sans CJK SC", monospace; color: #222; white-space: nowrap; }
.conn-c + .t-text { margin-top: -4px; }
.conn-p + .t-text { margin-top: 2px; }
.dots { fill: none; stroke: #999; stroke-dasharray: 1 1; }
.scroll { flex: 1; background: #f0f0f0; display: flex; flex-direction: column; align-items: center; padding-top: 10px; margin-right: 2px; }
.scroll-up { width: 12px; height: 8px; }
.thumb { width: 100%; height: 53px; background: #cdcdcd; margin-top: auto; }

/* right column */
.main { flex: 1; min-width: 0; display: flex; flex-direction: column; }
.bar { background: #f8f8f8; display: flex; align-items: center; border-radius: 3px; }
.row-b { height: 30px; padding-left: 10px; flex: none; }
.bar-b { width: 988px; height: 30px; padding-bottom: 2px; }
.row-c { height: 31px; margin-top: 3px; flex: none; display: flex; padding-left: 3px; }
.bar-c1 { width: 796px; height: 31px; }
.bar-c2 { flex: 1; margin-left: 3px; height: 31px; padding-right: 4px; }
.bar-c2 .grip { margin-left: 4px; }
.row-d { height: 33px; margin-top: 6px; flex: none; display: flex; padding-left: 3px; justify-content: space-between; }
.bar-d { width: 889px; height: 33px; padding-bottom: 3px; }
.bar-d2 { width: 37px; height: 33px; }
.sel { display: flex; align-items: center; justify-content: space-between; height: 28px; background: #fff; padding-left: 2px; flex: none; }
.sel b { width: 13px; height: 28px; background: #f4f4f4; display: flex; align-items: center; justify-content: center; }
.s71 { width: 71px; } .s84 { width: 84px; } .s87 { width: 87px; }
.sel span { font-family: "Noto Sans CJK SC", sans-serif; }
.c-attr { width: 63px; padding: 0 3px; }
.c-list { width: 94px; padding: 0 4px; }
.more { margin-left: auto; font-weight: bold; font-size: 16px; color: #111; margin-top: -14px; }
.combo { width: 69px; height: 28px; border: 1px solid #888; background: #f4f4f4; display: flex; align-items: center; justify-content: flex-end; padding-right: 4px; flex: none; }

/* 3D viewport */
.canvas { position: relative; flex: 1; min-height: 0; background: #000; border-top: 1px solid #555; }
.scene { position: absolute; left: 0; top: 0; width: 1027px; height: 715px; display: block; }
.g-top { fill: #9fb55c; }
.g-side { fill: #7f8f47; }
.g-dark { fill: #6b7a3c; }
.cyan path { fill: none; stroke: #00dcdc; stroke-width: 1.300; }
.gizmo circle { fill: none; stroke: #b8b8b8; stroke-width: 1; opacity: .85; }
.mesh { fill: none; stroke: #a5958e; stroke-width: 1.400; }
.mesh-thin { stroke-width: 1; }
.wire path { fill: none; stroke: #959595; stroke-width: 1.500; }
.wire .wire-hi { stroke: #bdbdbd; stroke-width: 1.400; }
.ax-b { stroke: #0a84ff; stroke-width: 5; fill: none; }
.ax-b-h { fill: #0a84ff; }
.ax-r { stroke: #f00; stroke-width: 5; fill: none; }
.ax-r-h { fill: #f00; }
.ax-g { stroke: #0f0; stroke-width: 5; fill: none; }
.ax-g-h { fill: #0f0; }
.ax-t { font: 15px "Liberation Sans", sans-serif; }
.ax-t.z { fill: #0a6fd8; }
.ax-t.y { fill: #0a7a0a; font-size: 12px; }
.ax-t.x { fill: #a00000; font-size: 12px; }

.float-panel { position: absolute; left: 12px; top: 3px; width: 210px; height: 223px; background: #fff; border: 1px solid #444; display: flex; flex-direction: column; }
.float-title { height: 39px; padding: 10px 0 0 9px; color: #a3a3a3; flex: none; }
.float-list { flex: 1; border: 2px solid #a9aeb5; padding: 0 0 0 4px; }
.chk { height: 15px; display: flex; align-items: center; gap: 5px; color: #111; white-space: nowrap; }
.chk span { margin-bottom: 2px; }
.chk svg { width: 14px; height: 14px; flex: none; }
```
FILE: script.js
```js
// Rebar meshes of the 3D view: each is a projected grid between four corners.
function lerp(a, b, t) { return [a[0] + (b[0] - a[0]) * t, a[1] + (b[1] - a[1]) * t]; }

function grid(id, p0, p1, p2, p3, nu, nv) {
  var d = '';
  var i, t, a, b;
  for (i = 0; i <= nu; i++) {
    t = i / nu;
    a = lerp(p0, p1, t); b = lerp(p3, p2, t);
    d += 'M' + a[0].toFixed(1) + ' ' + a[1].toFixed(1) + 'L' + b[0].toFixed(1) + ' ' + b[1].toFixed(1);
  }
  for (i = 0; i <= nv; i++) {
    t = i / nv;
    a = lerp(p0, p3, t); b = lerp(p1, p2, t);
    d += 'M' + a[0].toFixed(1) + ' ' + a[1].toFixed(1) + 'L' + b[0].toFixed(1) + ' ' + b[1].toFixed(1);
  }
  document.getElementById(id).setAttribute('d', d);
}

grid('mesh-up', [507, 426], [803, 480], [1155, 644], [857, 590], 13, 8);
grid('mesh-low', [483, 517], [778, 572], [1130, 735], [835, 680], 20, 40);
```
